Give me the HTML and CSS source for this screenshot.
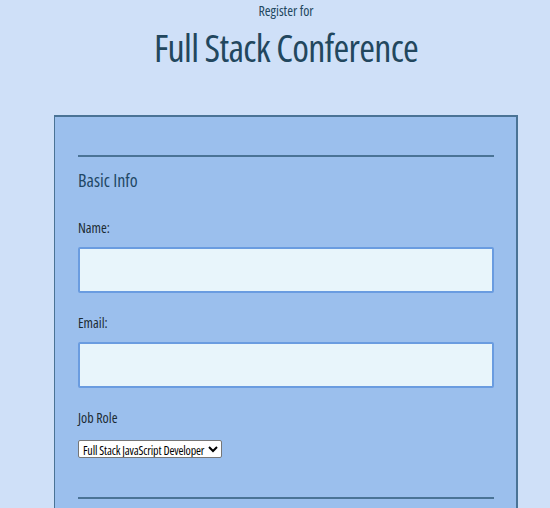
FILE: index.html
```html
<!DOCTYPE html>
<html lang="en">
<head>
    <meta charset="UTF-8">
    <meta name="viewport" content="width=device-width, initial-scale=1.0">
    <title>Full Stack Conference</title>
    <link rel="stylesheet" href="styles.css">
</head>
<body>
    <div class="container">
        <header class="page-header">
            <span class="kicker">Register for</span>
            <h1>Full Stack Conference</h1>
        </header>

        <form class="register">
            <div class="section">
                <h2 class="section-title">Basic Info</h2>

                <label for="name">Name:</label>
                <input type="text" id="name" class="field">

                <label for="mail">Email:</label>
                <input type="email" id="mail" class="field">

                <label for="title">Job Role</label>
                <select id="title" class="role">
                    <option>Full Stack JavaScript Developer</option>
                    <option>Front End Developer</option>
                    <option>Back End Developer</option>
                </select>
            </div>

            <div class="section"></div>
        </form>
    </div>
</body>
</html>
```

FILE: styles.css
```css
* {
    margin: 0;
    padding: 0;
    box-sizing: border-box;
}

body {
    font-family: 'Open Sans', sans-serif;
    font-stretch: condensed;
    background-color: #cfe0f8;
    color: #1c2b33;
    height: 100vh;
    overflow: hidden;
}

.container {
    width: 464px;
    margin-left: 54px;
}

.page-header {
    display: flex;
    flex-direction: column;
    align-items: center;
    color: #22475e;
}

.kicker {
    font-size: 14px;
    line-height: 17px;
    margin-top: 2px;
}

.page-header h1 {
    font-size: 38px;
    font-weight: normal;
    letter-spacing: -0.7px;
    line-height: 44px;
    margin-top: 6px;
}

.register {
    margin-top: 46px;
    height: calc(100vh - 115px);
    overflow: hidden;
    background-color: #9bbfed;
    border: 2px solid #4a7396;
    border-left-width: 1px;
    border-bottom: 0;
    padding: 38px 22px 0 23px;
}

.section {
    display: flex;
    flex-direction: column;
    align-items: flex-start;
    border-top: 2px solid #4a7396;
    padding-top: 12px;
    padding-bottom: 39px;
}

.section-title {
    font-size: 18px;
    font-weight: normal;
    line-height: 22px;
    color: #1f4866;
    margin-bottom: 28px;
}

label {
    font-size: 14px;
    line-height: 17px;
    margin-bottom: 11px;
}

.field {
    width: 100%;
    height: 46px;
    background-color: #e8f5fb;
    border: 2px solid #6a9ce0;
    border-radius: 2px;
    margin-bottom: 21px;
    font-size: 16px;
    padding: 0 10px;
}

.role {
    margin-top: 3px;
    height: 18px;
    font-family: 'Open Sans', sans-serif;
    font-stretch: condensed;
    font-size: 12px;
    letter-spacing: -0.15px;
    color: #000000;
    background-color: #ffffff;
    border: 1px solid #767676;
    border-radius: 2px;
}
```
